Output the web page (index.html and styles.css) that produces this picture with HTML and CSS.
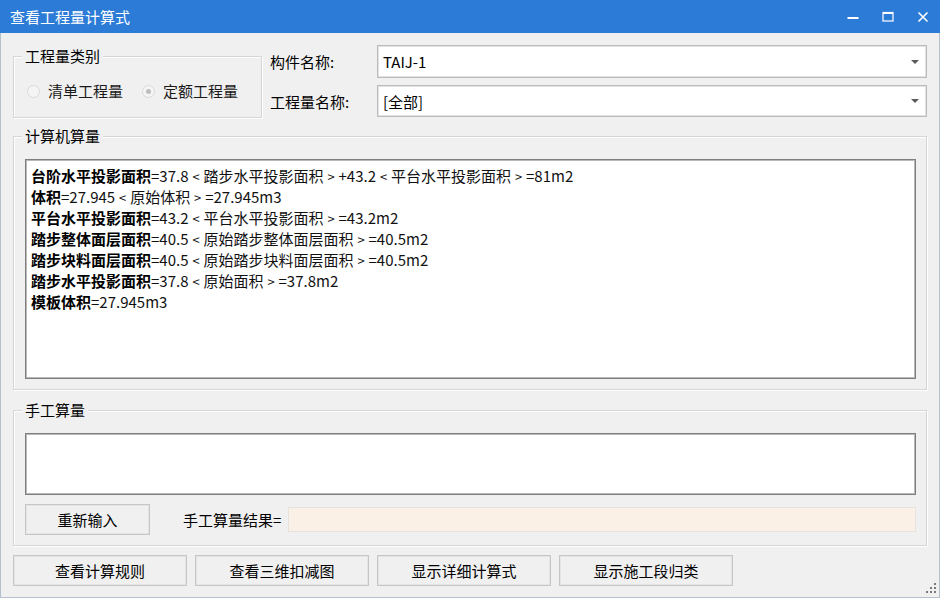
FILE: index.html
```html
<!DOCTYPE html>
<html lang="zh-CN">
<head>
  <meta charset="UTF-8" />
  <title>查看工程量计算式</title>
  <link rel="stylesheet" href="styles.css">
</head>
<body>
  <div class="window">
    <div class="titlebar">
      <span class="title">查看工程量计算式</span>
      <div class="controls">
        <span class="ctl">
          <svg width="12" height="12" viewBox="0 0 12 12"><rect x="0.5" y="6" width="11" height="2" fill="#fff"/></svg>
        </span>
        <span class="ctl">
          <svg width="12" height="12" viewBox="0 0 12 12"><rect x="1" y="1.5" width="10" height="8.5" fill="none" stroke="#fff" stroke-width="1.2"/><rect x="1" y="1" width="10" height="2" fill="#fff"/></svg>
        </span>
        <span class="ctl">
          <svg width="12" height="12" viewBox="0 0 12 12"><path d="M1.5 1.5 L10.5 10.5 M10.5 1.5 L1.5 10.5" stroke="#fff" stroke-width="1.6" fill="none"/></svg>
        </span>
      </div>
    </div>

    <div class="main">
      <div class="top-row">
        <div class="group type-group">
          <div class="group-title">工程量类别</div>
          <div class="radios">
            <span class="radio"><span class="dot"></span>清单工程量</span>
            <span class="radio checked"><span class="dot"></span>定额工程量</span>
          </div>
        </div>
        <div class="fields">
          <div class="field">
            <span class="field-label">构件名称:</span>
            <div class="combo tall"><span>TAIJ-1</span><i class="arrow"></i></div>
          </div>
          <div class="field">
            <span class="field-label">工程量名称:</span>
            <div class="combo"><span>[全部]</span><i class="arrow"></i></div>
          </div>
        </div>
      </div>

      <div class="group calc-group">
        <div class="group-title">计算机算量</div>
        <div class="text-box calc-box">
          <div><b>台阶水平投影面积</b>=37.8<span class="ang">&lt;</span>踏步水平投影面积<span class="ang">&gt;</span>+43.2<span class="ang">&lt;</span>平台水平投影面积<span class="ang">&gt;</span>=81m2</div>
          <div><b>体积</b>=27.945<span class="ang">&lt;</span>原始体积<span class="ang">&gt;</span>=27.945m3</div>
          <div><b>平台水平投影面积</b>=43.2<span class="ang">&lt;</span>平台水平投影面积<span class="ang">&gt;</span>=43.2m2</div>
          <div><b>踏步整体面层面积</b>=40.5<span class="ang">&lt;</span>原始踏步整体面层面积<span class="ang">&gt;</span>=40.5m2</div>
          <div><b>踏步块料面层面积</b>=40.5<span class="ang">&lt;</span>原始踏步块料面层面积<span class="ang">&gt;</span>=40.5m2</div>
          <div><b>踏步水平投影面积</b>=37.8<span class="ang">&lt;</span>原始面积<span class="ang">&gt;</span>=37.8m2</div>
          <div><b>模板体积</b>=27.945m3</div>
        </div>
      </div>

      <div class="group manual-group">
        <div class="group-title">手工算量</div>
        <div class="text-box manual-box"></div>
        <div class="manual-row">
          <button class="btn reenter">重新输入</button>
          <span class="result-label">手工算量结果=</span>
          <div class="result"></div>
        </div>
      </div>

      <div class="actions">
        <button class="btn">查看计算规则</button>
        <button class="btn">查看三维扣减图</button>
        <button class="btn">显示详细计算式</button>
        <button class="btn">显示施工段归类</button>
      </div>
    </div>

    <svg class="grip" width="10" height="10" viewBox="0 0 10 10">
      <rect x="8" y="0" width="2" height="2" fill="#7a7a7a"/>
      <rect x="4" y="4" width="2" height="2" fill="#7a7a7a"/>
      <rect x="8" y="4" width="2" height="2" fill="#7a7a7a"/>
      <rect x="0" y="8" width="2" height="2" fill="#7a7a7a"/>
      <rect x="4" y="8" width="2" height="2" fill="#7a7a7a"/>
      <rect x="8" y="8" width="2" height="2" fill="#7a7a7a"/>
    </svg>
  </div>
</body>
</html>
```

FILE: styles.css
```css
* { box-sizing: border-box; }
body {
  margin: 0;
  font-family: "Noto Sans CJK SC", "Microsoft YaHei", sans-serif;
  font-size: 15px;
  color: #000;
  background: #f0f0f0;
}
.window {
  position: relative;
  width: 940px;
  height: 598px;
  display: flex;
  flex-direction: column;
  background: #f0f0f0;
}
.titlebar {
  height: 33px;
  background: #2b7bd7;
  color: #fff;
  display: flex;
  align-items: center;
  padding-left: 10px;
}
.title { font-size: 15px; line-height: 20px; }
.controls { margin-left: auto; display: flex; }
.ctl {
  width: 35px;
  height: 33px;
  display: flex;
  align-items: center;
  justify-content: center;
}
.main {
  flex: 1;
  border-left: 1px solid #b4c0cc;
  border-right: 1px solid #b4c0cc;
  border-bottom: 1px solid #b4c0cc;
  padding: 12px 12px 0 12px;
}

/* group boxes */
.group {
  border: 1px solid #d6d6d6;
  box-shadow: inset 1px 1px 0 #fff, 1px 1px 0 #fff;
}
.group-title {
  width: fit-content;
  margin: -11px 0 0 8px;
  padding: 0 3px;
  line-height: 20px;
  background: #f0f0f0;
}

.top-row { display: flex; gap: 8px; }
.type-group {
  width: 249px;
  height: 62px;
  margin-top: 11px;
}
.radios {
  display: flex;
  padding-left: 13px;
  margin-top: 15px;
  line-height: 20px;
}
.radio { display: flex; align-items: center; gap: 8px; color: #1a1a1a; }
.radio + .radio { margin-left: 19px; }
.dot {
  width: 13px;
  height: 13px;
  border-radius: 50%;
  border: 1px solid #dadada;
  background: #f4f4f4;
  position: relative;
}
.radio.checked .dot::after {
  content: "";
  position: absolute;
  left: 3px;
  top: 3px;
  width: 5px;
  height: 5px;
  border-radius: 50%;
  background: #bdbdbd;
}

.fields { flex: 1; display: flex; flex-direction: column; gap: 7px; }
.field { display: flex; align-items: center; }
.field-label { width: 107px; }
.combo {
  flex: 1;
  height: 32px;
  background: #fff;
  border: 1px solid #bcbcbc;
  box-shadow: inset 0 0 0 1px #e2e2e2;
  display: flex;
  align-items: center;
  padding-left: 5px;
  padding-right: 7px;
}
.combo.tall { height: 33px; }
.arrow {
  margin-left: auto;
  width: 0;
  height: 0;
  border-left: 4px solid transparent;
  border-right: 4px solid transparent;
  border-top: 4px solid #5a5a5a;
}

/* text boxes */
.text-box {
  background: #fff;
  border: 1px solid #7e7e7e;
  box-shadow: inset 0 0 0 1px #b9b9b9;
  margin: 0 10px 0 11px;
}
.calc-group { margin-top: 18px; padding-bottom: 10px; }
.calc-box {
  margin-top: 13px;
  height: 220px;
  padding: 5px 5px;
  font-size: 15px;
  color: #111;
}
.calc-box div { height: 21px; line-height: 21px; }
.calc-box b { font-weight: 700; color: #000; }
.ang {
  display: inline-block;
  width: 15px;
  text-align: center;
  font-size: 13px;
  line-height: 15px;
}

.manual-group { margin-top: 20px; padding-bottom: 10px; }
.manual-box { margin-top: 13px; height: 62px; }
.manual-row {
  display: flex;
  align-items: center;
  margin: 9px 10px 0 11px;
}
.result-label { margin-left: 33px; }
.result {
  flex: 1;
  height: 25px;
  margin-left: 7px;
  background: #faf0e6;
  border: 1px solid #e6e3df;
}

/* buttons */
.btn {
  font-family: inherit;
  font-size: 15px;
  color: #000;
  height: 31px;
  background: #f0f0f0;
  border: 1px solid #c6c6c6;
  box-shadow: inset 0 0 0 1px #e4e4e4;
  padding: 0;
}
.reenter { width: 125px; }
.actions { display: flex; gap: 8px; margin-top: 9px; }
.actions .btn { width: 174px; }

.grip { position: absolute; right: 4px; bottom: 5px; }
```
